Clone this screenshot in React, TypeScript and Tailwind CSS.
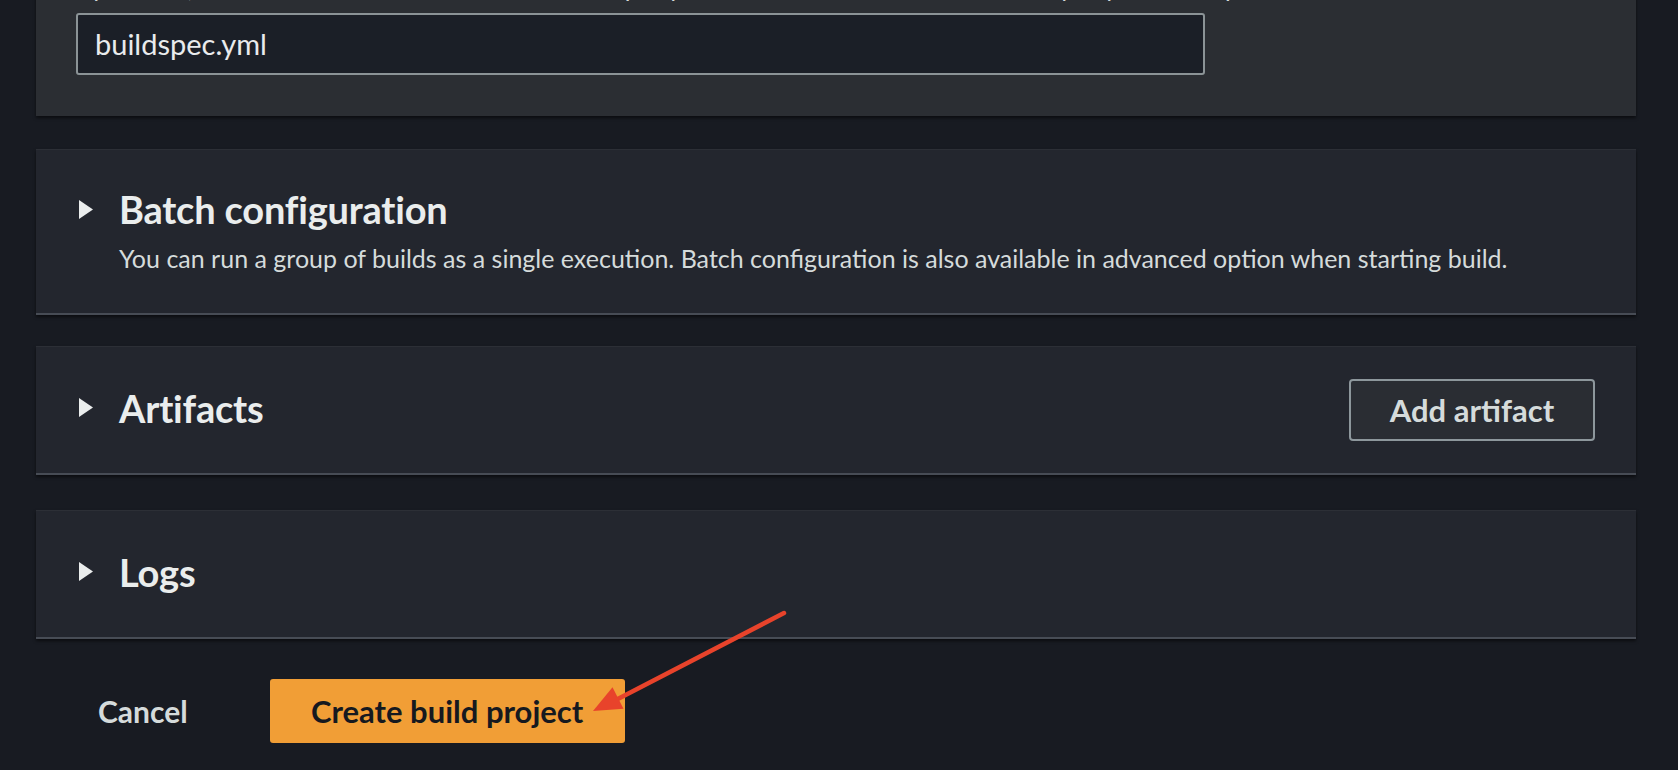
import React from "react";

const font = { fontFamily: "Lato, 'Liberation Sans', sans-serif" };

function Caret() {
  return (
    <svg width="16" height="19" viewBox="0 0 16 19" className="shrink-0">
      <polygon points="1,0 15,9.5 1,19" fill="#eaeded" />
    </svg>
  );
}

function Section({
  title,
  description,
  action,
  className = "",
}: {
  title: string;
  description?: string;
  action?: React.ReactNode;
  className?: string;
}) {
  return (
    <div
      className={`bg-[#23262e] border-t border-[#2c2f36] border-b-2 border-b-[#474c55] shadow-[0_2px_3px_rgba(0,0,0,0.55)] ${className}`}
    >
      {description ? (
        <div className="pl-[42px] pr-[41px] pt-[36px] pb-[39px]">
          <div className="flex items-center gap-[25px] h-[46px]">
            <Caret />
            <h2 className="text-[38px] leading-[46px] font-bold text-[#eaeded] tracking-[-0.2px]">{title}</h2>
          </div>
          <p className="pl-[41px] mt-[10px] text-[25px] leading-[32px] text-[#d5dbdb]">{description}</p>
        </div>
      ) : (
        <div className="pl-[42px] pr-[41px] h-[126px] flex items-center justify-between">
          <div className="flex items-center gap-[25px] pb-[5px]">
            <Caret />
            <h2 className="text-[38px] leading-[46px] font-bold text-[#eaeded] tracking-[-0.2px]">{title}</h2>
          </div>
          {action}
        </div>
      )}
    </div>
  );
}

export default function App() {
  return (
    <div className="relative h-[770px] w-[1678px] overflow-hidden bg-[#181b22]" style={font}>
      <div className="pl-[36px] pr-[42px] flex flex-col">
        {/* Buildspec panel, scrolled mostly out of view */}
        <div className="bg-[#2b2e33] shadow-[0_2px_3px_rgba(0,0,0,0.55)] pl-[40px] pb-[41px] -mt-[29px]">
          <p className="h-[32px] leading-[32px] text-[25px] text-[#d5dbdb] whitespace-nowrap overflow-hidden">
            By default, CodeBuild looks for a file named buildspec.yml in the source code root directory. If your buildspec file uses
          </p>
          <div className="mt-[10px] w-[1129px] h-[62px] rounded-[3px] border-2 border-[#8b9396] bg-[#1b1f27] flex items-center px-[17px]">
            <span className="text-[29px] text-[#e9ebed]">buildspec.yml</span>
          </div>
        </div>

        <Section
          className="mt-[33px]"
          title="Batch configuration"
          description="You can run a group of builds as a single execution. Batch configuration is also available in advanced option when starting build."
        />

        <Section
          className="mt-[31px]"
          title="Artifacts"
          action={
            <button className="w-[246px] h-[62px] rounded-[4px] border-2 border-[#8d979c] bg-[#2a2d33] text-[31px] font-bold text-[#d5dbdb]">
              Add artifact
            </button>
          }
        />

        <Section className="mt-[35px]" title="Logs" />
      </div>

      <div className="flex items-center pl-[78px] mt-[40px]">
        <button className="h-[64px] px-[20px] text-[30px] font-bold text-[#d5dbdb]">Cancel</button>
        <button className="ml-[62px] w-[355px] h-[64px] rounded-[3px] bg-[#f19e36] text-[31px] font-bold text-[#16191f]">
          Create build project
        </button>
      </div>

      {/* annotation arrow */}
      <svg className="absolute left-0 top-0 pointer-events-none" width="1678" height="770">
        <line x1="784" y1="613" x2="612" y2="702" stroke="#e8432b" strokeWidth="4.5" strokeLinecap="round" />
        <polygon points="593,711 612.5,687.3 623.5,708.7" fill="#e8432b" />
      </svg>
    </div>
  );
}
